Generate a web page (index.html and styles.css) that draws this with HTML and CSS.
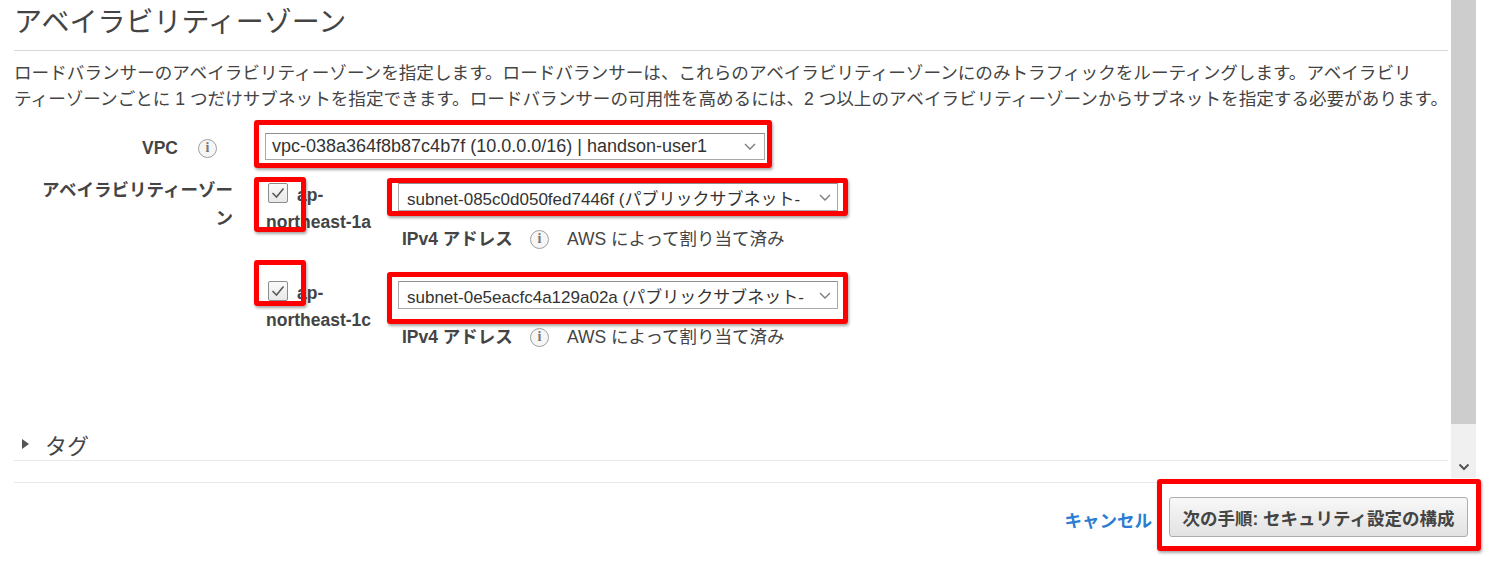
FILE: index.html
```html
<!DOCTYPE html>
<html lang="ja">
<head>
<meta charset="utf-8">
<title>アベイラビリティーゾーン</title>
<link rel="stylesheet" href="styles.css">
</head>
<body>
<div class="main">
  <div class="content">
    <h1 class="title">アベイラビリティーゾーン</h1>
    <p class="desc">ロードバランサーのアベイラビリティーゾーンを指定します。ロードバランサーは、これらのアベイラビリティーゾーンにのみトラフィックをルーティングします。アベイラビリ<br>ティーゾーンごとに 1 つだけサブネットを指定できます。ロードバランサーの可用性を高めるには、2 つ以上のアベイラビリティーゾーンからサブネットを指定する必要があります。</p>

    <div class="form">
      <div class="label label-vpc"><span>VPC</span><span class="info">i</span></div>
      <div class="field">
        <div class="mark mark-vpc">
          <div class="select select-vpc">
            <span class="select-text">vpc-038a364f8b87c4b7f (10.0.0.0/16) | handson-user1</span>
            <svg class="chev" width="12" height="7" viewBox="0 0 12 7"><polyline points="1,1 6,6 11,1" fill="none" stroke="#7a7a7a" stroke-width="1.3"/></svg>
          </div>
        </div>
      </div>

      <div class="label label-az">アベイラビリティーゾー<br>ン</div>
      <div class="field az-list">
        <div class="az-item az-item-1">
          <div class="az-name">
            <span class="mark-overlay"></span>
            <span class="checkbox"><svg width="20" height="20" viewBox="0 0 20 20"><polyline points="4.5,10 8.5,14 15.5,5.5" fill="none" stroke="#5a5a5a" stroke-width="1.6"/></svg></span>ap-<br>northeast-1a
          </div>
          <div class="az-subnet">
            <div class="mark mark-subnet">
              <div class="select select-subnet">
                <span class="select-text">subnet-085c0d050fed7446f (パブリックサブネット-</span>
                <svg class="chev" width="12" height="7" viewBox="0 0 12 7"><polyline points="1,1 6,6 11,1" fill="none" stroke="#7a7a7a" stroke-width="1.3"/></svg>
              </div>
            </div>
            <div class="ipv4"><b>IPv4 アドレス</b><span class="info">i</span><span>AWS によって割り当て済み</span></div>
          </div>
        </div>

        <div class="az-item az-item-2">
          <div class="az-name">
            <span class="mark-overlay"></span>
            <span class="checkbox"><svg width="20" height="20" viewBox="0 0 20 20"><polyline points="4.5,10 8.5,14 15.5,5.5" fill="none" stroke="#5a5a5a" stroke-width="1.6"/></svg></span>ap-<br>northeast-1c
          </div>
          <div class="az-subnet">
            <div class="mark mark-subnet">
              <div class="select select-subnet">
                <span class="select-text">subnet-0e5eacfc4a129a02a (パブリックサブネット-</span>
                <svg class="chev" width="12" height="7" viewBox="0 0 12 7"><polyline points="1,1 6,6 11,1" fill="none" stroke="#7a7a7a" stroke-width="1.3"/></svg>
              </div>
            </div>
            <div class="ipv4"><b>IPv4 アドレス</b><span class="info">i</span><span>AWS によって割り当て済み</span></div>
          </div>
        </div>
      </div>
    </div>

    <div class="tag-row"><span class="caret"></span>タグ</div>
    <div class="rule"></div>
  </div>
  <div class="scrollbar">
    <div class="thumb"></div>
    <div class="track">
      <svg width="12" height="8" viewBox="0 0 12 8"><polyline points="1.5,1.5 6,6 10.5,1.5" fill="none" stroke="#555" stroke-width="2"/></svg>
    </div>
  </div>
</div>

<div class="footer">
  <a class="cancel" href="#">キャンセル</a>
  <div class="mark mark-btn">
    <button class="btn" type="button">次の手順: セキュリティ設定の構成</button>
  </div>
</div>
</body>
</html>
```

FILE: styles.css
```css
* { box-sizing: border-box; }

html, body {
  margin: 0;
  padding: 0;
  background: #fff;
}

body {
  font-family: "Liberation Sans", "Noto Sans CJK JP", sans-serif;
  font-size: 17.5px;
  color: #444;
  width: 1487px;
  height: 562px;
  overflow: hidden;
}

.main {
  display: flex;
  align-items: flex-start;
}

.content {
  width: 1451px;
  padding: 0 3px 0 14px;
}

.title {
  margin: 5px 0 0;
  font-size: 28px;
  font-weight: normal;
  line-height: 36px;
  padding-bottom: 9px;
  border-bottom: 1px solid #d6d6d6;
  color: #444;
}

.desc {
  margin: 9px 0 0;
  font-size: 17.6px;
  line-height: 26px;
  white-space: nowrap;
  color: #444;
}

.form {
  display: grid;
  grid-template-columns: 219px 1fr;
  column-gap: 20px;
  row-gap: 9px;
  margin-top: 8px;
}

.label {
  text-align: right;
  font-weight: bold;
  line-height: 28px;
  color: #444;
}

.label-vpc {
  display: flex;
  justify-content: flex-end;
  align-items: center;
  gap: 20px;
  padding-top: 14px;
  padding-right: 16px;
  height: 42px;
}

.label-az {
  margin-top: -1px;
}

.info {
  display: inline-flex;
  align-items: center;
  justify-content: center;
  width: 19px;
  height: 19px;
  border: 1px solid #a0a0a0;
  border-radius: 50%;
  background: #f6f6f6;
  color: #777;
  font-family: "Liberation Serif", serif;
  font-weight: bold;
  font-size: 14px;
  line-height: 1;
}

.mark {
  border: 5px solid #ff0000;
  border-radius: 3px;
  box-shadow: 1px 2px 3px rgba(0, 0, 0, 0.35);
  display: inline-block;
  background: transparent;
}

.mark-vpc {
  margin-left: 1px;
  padding: 8px 2px 3px 6px;
}

.select {
  display: flex;
  align-items: center;
  border: 1px solid #a9a9a9;
  border-top-color: #8f8f8f;
  background: #fff;
  font-size: 18px;
  color: #333;
  padding-left: 6px;
}

.select-text {
  flex: 1;
  min-width: 0;
  white-space: nowrap;
}

.chev {
  flex: none;
  margin: 0 8px 0 6px;
}

.select-vpc {
  width: 500px;
  height: 27px;
}

.select-subnet {
  width: 440px;
  height: 28px;
  padding-left: 8px;
  font-size: 17px;
}

.select-subnet .chev {
  margin-right: 6px;
}

.az-item {
  display: flex;
}

.az-item-2 {
  margin-top: 20px;
}

.az-name {
  position: relative;
  width: 134px;
  padding-left: 13px;
  font-weight: bold;
  line-height: 27px;
  color: #444;
}

.az-item-1 .az-name { padding-top: 5px; }
.az-item-2 .az-name { padding-top: 8px; }

.checkbox {
  display: inline-block;
  vertical-align: top;
  width: 20px;
  height: 20px;
  margin: 1px 9px 0 2px;
  border: 1px solid #8c8c8c;
  border-radius: 2px;
  background: linear-gradient(#fafafa, #e8e8e8);
  position: relative;
}

.checkbox svg {
  position: absolute;
  left: -1px;
  top: -1px;
}

.mark-overlay {
  position: absolute;
  left: 1px;
  width: 52px;
  border: 5px solid #ff0000;
  border-radius: 3px;
  box-shadow: 1px 2px 3px rgba(0, 0, 0, 0.35);
}

.az-item-1 .mark-overlay { top: 0; height: 55px; }
.az-item-2 .mark-overlay { top: -12px; height: 46px; }

.mark-subnet {
  padding: 0 5px 0 6px;
}

.az-item-1 .mark-subnet { margin-top: 1px; }
.az-item-2 .mark-subnet { padding: 4px 5px 10px 6px; }

.ipv4 {
  display: flex;
  align-items: center;
  line-height: 26px;
  padding-left: 15px;
  color: #444;
}

.az-item-1 .ipv4 { margin-top: 10px; }

.ipv4 b {
  margin-right: 17px;
}

.ipv4 .info {
  margin-right: 18px;
}

.tag-row {
  margin-top: 78px;
  height: 33px;
  border-bottom: 1px solid #e8e8e8;
  display: flex;
  align-items: center;
  padding-left: 8px;
  font-size: 22px;
  color: #444;
}

.caret {
  width: 0;
  height: 0;
  border-left: 7px solid #555;
  border-top: 5px solid transparent;
  border-bottom: 5px solid transparent;
  margin-right: 16px;
}

.rule {
  margin-top: 21px;
  border-top: 1px solid #e8e8e8;
}

.scrollbar {
  width: 25px;
  display: flex;
  flex-direction: column;
}

.thumb {
  height: 424px;
  background: #cdcdcd;
}

.track {
  height: 54px;
  background: #f0f0f0;
  display: flex;
  flex-direction: column;
  justify-content: flex-end;
  align-items: center;
  padding-bottom: 7px;
}

.footer {
  display: flex;
  justify-content: flex-end;
  align-items: center;
  padding-right: 6px;
}

.cancel {
  margin-right: 5px;
  margin-top: 4px;
  font-weight: bold;
  color: #2a7dd3;
  text-decoration: none;
}

.mark-btn {
  margin-top: -4px;
  padding: 13px 8px 9px 7px;
}

.btn {
  display: block;
  width: 299px;
  height: 40px;
  border: 1px solid #adadad;
  border-radius: 3px;
  background: linear-gradient(#f8f8f8, #e2e2e2);
  font-family: "Liberation Sans", "Noto Sans CJK JP", sans-serif;
  font-size: 17.5px;
  font-weight: bold;
  color: #444;
  padding: 0;
}
```
